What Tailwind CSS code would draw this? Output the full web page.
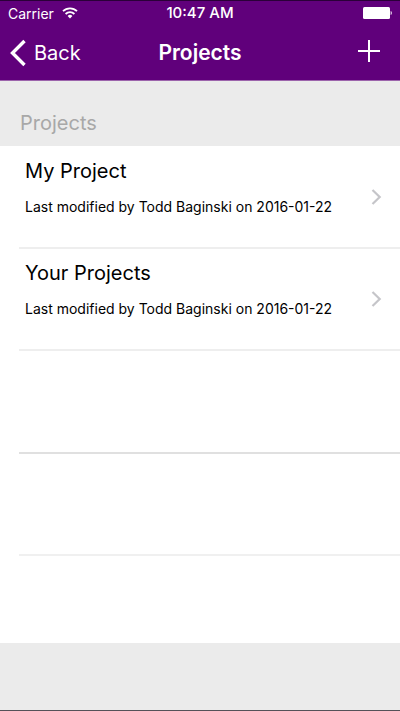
<!DOCTYPE html>
<html lang="en">
<head>
<meta charset="utf-8">
<meta name="viewport" content="width=device-width, initial-scale=1">
<title>Projects</title>
<script src="https://cdn.jsdelivr.net/npm/@tailwindcss/browser@4"></script>
</head>
<body class="flex min-h-screen flex-col border-t border-b border-t-[#2a0038] border-b-[#555158] bg-[#ebebeb] font-['Inter','Liberation_Sans',sans-serif] text-black">
  <header class="border-b border-[#9c64ac] bg-[#60007b] text-white">
    <div class="grid h-6 grid-cols-3 items-center px-2 text-[14px]">
      <div class="flex items-center gap-2">
        <span>Carrier</span>
        <svg class="h-3 w-4" viewBox="0 0 16 12" fill="none" stroke="currentColor" stroke-width="1.8" aria-hidden="true">
          <path d="M1 4.2a10 10 0 0 1 14 0M3.6 7a6.3 6.3 0 0 1 8.8 0"/>
          <path d="M8 11.4 5.6 9a3.5 3.5 0 0 1 4.8 0z" fill="currentColor" stroke="none"/>
        </svg>
      </div>
      <span class="text-center text-[15px] font-medium whitespace-nowrap">10:47 AM</span>
      <svg class="h-3 w-8 justify-self-end" viewBox="0 0 32 12" fill="currentColor" aria-hidden="true">
        <rect x="3" y="0" width="27" height="12" rx="1.5"/>
        <path d="M30.7 4v4c1.4-.3 1.4-3.7 0-4z"/>
      </svg>
    </div>
    <div class="grid h-[55px] grid-cols-3 items-center px-2">
      <a href="#" class="flex items-center gap-2 text-[20px]">
        <svg class="h-7 w-[18px]" viewBox="0 0 18 28" fill="none" stroke="currentColor" stroke-width="3.4" aria-hidden="true">
          <path d="M16.5 2 4.5 14l12 12"/>
        </svg>
        <span>Back</span>
      </a>
      <h1 class="text-center text-[21px] font-semibold">Projects</h1>
      <button type="button" aria-label="Add project" class="justify-self-end pr-3 pb-1">
        <svg class="size-[22px]" viewBox="0 0 22 22" fill="none" stroke="currentColor" stroke-width="2" aria-hidden="true">
          <path d="M11 0v22M0 11h22"/>
        </svg>
      </button>
    </div>
  </header>
  <main>
    <h2 class="px-5 pt-7 pb-[9px] text-[20px] leading-7 text-[#a8a8a8]">Projects</h2>
    <ul class="bg-white pl-[19px]">
      <li class="h-[103px] border-b-2 border-[#eeeeee]">
        <a href="#" class="flex h-full items-center justify-between pr-[18px] pl-1.5">
          <span class="flex flex-col gap-3 pb-4">
            <span class="text-[20px] leading-6">My Project</span>
            <span class="text-[14px] leading-6">Last modified by Todd Baginski on 2016-01-22</span>
          </span>
          <svg class="h-4 w-[11px]" viewBox="0 0 11 16" fill="none" stroke="#c5c5c9" stroke-width="2.2" aria-hidden="true"><path d="m1.5 1 7.2 7-7.2 7"/></svg>
        </a>
      </li>
      <li class="h-[102px] border-b-2 border-[#eeeeee]">
        <a href="#" class="flex h-full items-center justify-between pr-[18px] pl-1.5">
          <span class="flex flex-col gap-3 pb-4">
            <span class="text-[20px] leading-6">Your Projects</span>
            <span class="text-[14px] leading-6">Last modified by Todd Baginski on 2016-01-22</span>
          </span>
          <svg class="h-4 w-[11px]" viewBox="0 0 11 16" fill="none" stroke="#c5c5c9" stroke-width="2.2" aria-hidden="true"><path d="m1.5 1 7.2 7-7.2 7"/></svg>
        </a>
      </li>
      <li class="h-[103px] border-b-2 border-[#e0e0e0]"></li>
      <li class="h-[102px] border-b-2 border-[#f0f0f0]"></li>
      <li class="h-[87px]"></li>
    </ul>
  </main>
</body>
</html>
